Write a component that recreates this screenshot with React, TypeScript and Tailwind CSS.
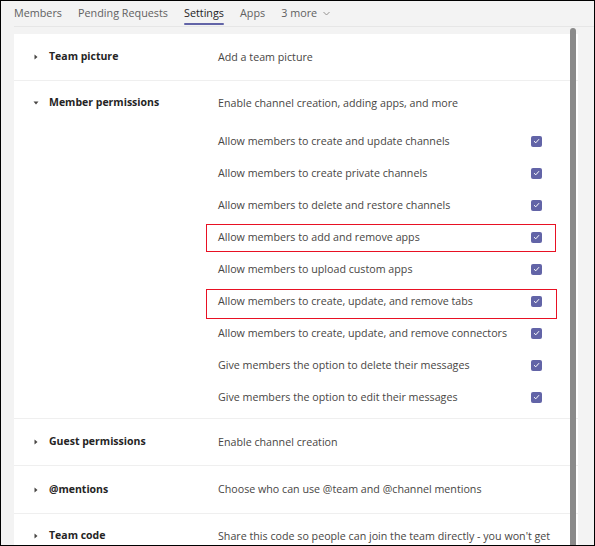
import { useState } from 'react';

const font = { fontFamily: '"Segoe UI", "Open Sans", "Noto Sans", sans-serif' };

const tabs = ['Members', 'Pending Requests', 'Settings', 'Apps'];

const memberPerms = [
  { label: 'Allow members to create and update channels' },
  { label: 'Allow members to create private channels' },
  { label: 'Allow members to delete and restore channels' },
  { label: 'Allow members to add and remove apps', box: 'top-[3px] h-[28px] w-[350px]' },
  { label: 'Allow members to upload custom apps' },
  { label: 'Allow members to create, update, and remove tabs', box: 'top-[4px] h-[30px] w-[351px]' },
  { label: 'Allow members to create, update, and remove connectors' },
  { label: 'Give members the option to delete their messages' },
  { label: 'Give members the option to edit their messages' },
];

function Caret({ open }: { open?: boolean }) {
  return (
    <svg width="6" height="6" viewBox="0 0 6 6" className="text-[#484644]">
      {open ? <path d="M0.5 1.5 L5.5 1.5 L3 4.5 Z" fill="currentColor" /> : <path d="M1.5 0.5 L4.5 3 L1.5 5.5 Z" fill="currentColor" />}
    </svg>
  );
}

function Checkbox() {
  return (
    <div className="w-[11px] h-[11px] rounded-[2px] bg-[#6264a7] flex items-center justify-center">
      <svg width="7" height="6" viewBox="0 0 7 6">
        <path d="M1 3.2 L2.8 4.8 L6 1.2" stroke="white" strokeWidth="1" fill="none" />
      </svg>
    </div>
  );
}

function SectionHeader({ title, desc, open }: { title: string; desc: string; open?: boolean }) {
  return (
    <div className="flex items-center h-full">
      <div className="w-[204px] flex items-center pl-[19px]">
        <span className="w-[16px] flex items-center">
          <Caret open={open} />
        </span>
        <span className="font-bold text-[#252424] text-[10.5px]">{title}</span>
      </div>
      <span className="text-[#484644] whitespace-nowrap">{desc}</span>
    </div>
  );
}

export default function App() {
  const [active] = useState('Settings');

  return (
    <div className="relative w-[595px] h-[546px] border border-black bg-[#f3f3f3] overflow-hidden text-[10.7px]" style={font}>
      {/* tabs */}
      <div className="flex items-end h-[26px] ml-[13px] border-b border-[#e6e6e6] gap-[16px]">
        {tabs.map((t) => (
          <div key={t} className="relative h-full flex items-center">
            <span className={t === active ? 'text-[#252424] text-[10.8px]' : 'text-[#616161] text-[10.8px]'}>{t}</span>
            {t === active && <div className="absolute left-0 right-0 bottom-[1px] h-[2px] rounded-full bg-[#6264a7]" />}
          </div>
        ))}
        <div className="h-full flex items-center gap-[6px] text-[#616161] text-[10.8px]">
          <span>3 more</span>
          <svg width="7" height="5" viewBox="0 0 7 5">
            <path d="M0.5 1 L3.5 4 L6.5 1" stroke="#8a8886" strokeWidth="0.9" fill="none" />
          </svg>
        </div>
      </div>

      {/* settings panel */}
      <div className="ml-[13px] mt-[7px] w-[564px] bg-white">
        <div className="h-[47px] border-b border-[#efefef]">
          <SectionHeader title="Team picture" desc="Add a team picture" />
        </div>

        <div className="border-b border-[#efefef] pb-[5px]">
          <div className="h-[44px]">
            <SectionHeader title="Member permissions" desc="Enable channel creation, adding apps, and more" open />
          </div>
          {memberPerms.map((p) => (
            <div key={p.label} className="relative h-[32px] flex items-center pl-[204px]">
              <span className="flex-1 text-[#484644]">{p.label}</span>
              <div className="w-[47px]">
                <Checkbox />
              </div>
              {p.box && <div className={`absolute left-[192px] border border-[#e81123] ${p.box}`} />}
            </div>
          ))}
        </div>

        <div className="h-[47px] border-b border-[#efefef]">
          <SectionHeader title="Guest permissions" desc="Enable channel creation" />
        </div>
        <div className="h-[48px] border-b border-[#efefef]">
          <SectionHeader title="@mentions" desc="Choose who can use @team and @channel mentions" />
        </div>
        <div className="h-[44px]">
          <SectionHeader title="Team code" desc="Share this code so people can join the team directly - you won't get" />
        </div>
      </div>

      {/* scrollbar */}
      <div className="absolute left-[569px] top-[27px] bottom-0 w-[6px] rounded-t-full bg-[#8a8a8a]" />
    </div>
  );
}
